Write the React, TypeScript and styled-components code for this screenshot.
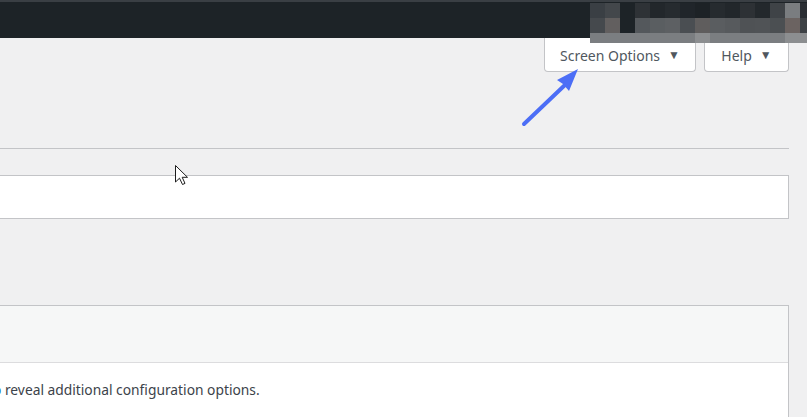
import React from "react";
import styled, { createGlobalStyle } from "styled-components";

const Global = createGlobalStyle`
  html, body { margin: 0; padding: 0; }
  body {
    background: #f0f0f1;
    font-family: "Noto Sans", "Open Sans", sans-serif;
    color: #3c434a;
    overflow: hidden;
  }
  #root { height: 417px; overflow: hidden; position: relative; }
`;

const Page = styled.div`
  position: relative;
  width: 807px;
  height: 417px;
  overflow: hidden;
  background: #f0f0f1;
`;

const AdminBar = styled.div`
  height: 36px;
  background: #1d2327;
  border-top: 2px solid #3a3f44;
`;

const Mosaic = styled.div`
  position: absolute;
  top: 3px;
  left: 590px;
  display: grid;
  grid-template-columns: repeat(15, 15px);
  grid-template-rows: 15px 15px 10px;
`;

const Cell = styled.div<{ $c: string }>`
  background: ${(p) => p.$c};
`;

const MetaLinks = styled.div`
  display: flex;
  justify-content: flex-end;
  gap: 8px;
  padding-right: 18px;
`;

const MetaButton = styled.button<{ $w: number }>`
  width: ${(p) => p.$w}px;
  height: 34px;
  box-sizing: border-box;
  display: flex;
  align-items: center;
  justify-content: center;
  gap: 8px;
  background: #fff;
  border: 1px solid #c3c4c7;
  border-top: none;
  border-radius: 0 0 4px 4px;
  font-family: "Noto Sans", sans-serif;
  font-size: 14px;
  color: #50575e;
  padding: 2px 0 0;
`;

const Caret = styled.span`
  font-size: 12px;
  color: #50575e;
  margin-top: -2px;
`;

const Content = styled.div`
  margin-left: -20px;
  padding-right: 18px;
`;

const Rule = styled.div`
  height: 1px;
  background: #c3c4c7;
  margin-top: 76px;
`;

const SearchBox = styled.div`
  margin-top: 26px;
  height: 44px;
  box-sizing: border-box;
  background: #fff;
  border: 1px solid #c3c4c7;
`;

const Panel = styled.div`
  margin-top: 86px;
  background: #fff;
  border: 1px solid #c3c4c7;
  border-bottom: none;
  height: 140px;
`;

const PanelHead = styled.div`
  height: 56px;
  background: #f6f7f7;
  border-bottom: 1px solid #dcdcde;
`;

const PanelBody = styled.p`
  margin: 16px 0 0 20px;
  font-size: 13.8px;
  line-height: 22px;
  color: #3c434a;
  white-space: nowrap;
`;

const CutLink = styled.span`
  color: #2271b1;
  margin-left: -8px;
`;

const Overlay = styled.svg`
  position: absolute;
  left: 0;
  top: 0;
  pointer-events: none;
`;

const row1 = ["#3a3f44","#43474b","#1d2327","#2e3236","#22272b","#262b2f","#20252a","#1d2226","#262b2f","#22272b","#2d3135","#23282c","#3f4347","#7a7d80","#2a2e33"];
const row2 = ["#45494d","#625f5f","#1d2327","#54585c","#5a5e61","#5d6063","#4a4e52","#5f5d5d","#5a5d60","#575a5d","#4f5255","#505356","#4b4f52","#6b6361","#3d4145"];
const row3 = ["#7b7e81","#7b7e81","#7b7e81","#7b7e81","#7b7e81","#7b7e81","#7b7e81","#8c8e90","#7b7e81","#7b7e81","#7b7e81","#7b7e81","#7b7e81","#8c8e90","#8c8e90"];

export default function App() {
  return (
    <Page>
      <Global />
      <AdminBar />
      <MetaLinks>
        <MetaButton $w={152}>
          Screen Options <Caret>▼</Caret>
        </MetaButton>
        <MetaButton $w={85}>
          Help <Caret>▼</Caret>
        </MetaButton>
      </MetaLinks>
      <Content>
        <Rule />
        <SearchBox />
        <Panel>
          <PanelHead />
          <PanelBody>
            <CutLink>o</CutLink> reveal additional configuration options.
          </PanelBody>
        </Panel>
      </Content>
      <Mosaic>
        {[...row1, ...row2, ...row3].map((c, i) => (
          <Cell key={i} $c={c} />
        ))}
      </Mosaic>
      <Overlay width="807" height="417" viewBox="0 0 807 417">
        <line x1="524" y1="124" x2="566" y2="84" stroke="#4c6ef6" strokeWidth="4" strokeLinecap="round" />
        <polygon points="578,69 557,80 563,84 569,91" fill="#4c6ef6" />
        <path
          d="M175.5 165.5 L175.5 182 L179.5 178.2 L182.5 184.5 L185 183.4 L182.2 177.3 L187.5 177.3 Z"
          fill="#fff"
          stroke="#1d1d1d"
          strokeWidth="1"
          strokeLinejoin="round"
        />
      </Overlay>
    </Page>
  );
}
